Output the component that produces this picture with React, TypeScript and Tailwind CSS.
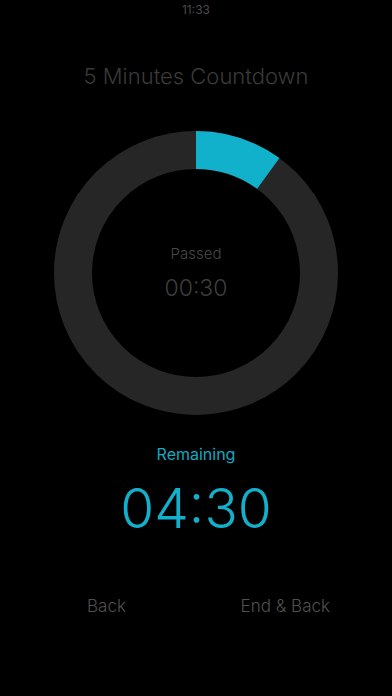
import React from "react";

function Ring() {
  const cx = 142, cy = 142, r = 123, sw = 38;
  const frac = 0.1;
  const a = frac * 2 * Math.PI;
  const ex = cx + r * Math.sin(a);
  const ey = cy - r * Math.cos(a);
  return (
    <svg width="284" height="284" viewBox="0 0 284 284" className="absolute inset-0">
      <circle cx={cx} cy={cy} r={r} fill="none" stroke="#262626" strokeWidth={sw} />
      <path d={`M ${cx} ${cy - r} A ${r} ${r} 0 0 1 ${ex} ${ey}`} fill="none" stroke="#11b0cb" strokeWidth={sw} />
    </svg>
  );
}

export default function App() {
  return (
    <div className="w-[392px] h-[696px] bg-black flex flex-col items-center" style={{ fontFamily: "Inter, 'Noto Sans', sans-serif" }}>
      <div className="h-[20px] w-full flex items-center justify-center text-[12px] text-[#4a4a4a]">11:33</div>
      <div className="mt-[42px] h-[28px] flex items-center text-[22px] font-light text-[#3a3a3a] leading-[28px]">5 Minutes Countdown</div>
      <div className="mt-[41px] relative w-[284px] h-[284px] flex flex-col items-center justify-center">
        <Ring />
        <div className="relative flex flex-col items-center mt-[1px]">
          <div className="text-[15px] font-light text-[#474747] leading-[20px]">Passed</div>
          <div className="mt-[9px] text-[23px] font-light text-[#3d3d3d] leading-[30px]">00:30</div>
        </div>
      </div>
      <div className="mt-[28px] h-[22px] flex items-center text-[16px] text-[#13a9c3] leading-[22px]">Remaining</div>
      <div className="mt-[13px] h-[60px] flex items-center text-[55px] font-light text-[#13b0cb] leading-[60px]">04:30</div>
      <div className="mt-[57px] w-full pl-[87px] pr-[62px] flex justify-between text-[17px] font-light text-[#505050] leading-[22px]">
        <span>Back</span>
        <span>End &amp; Back</span>
      </div>
    </div>
  );
}
